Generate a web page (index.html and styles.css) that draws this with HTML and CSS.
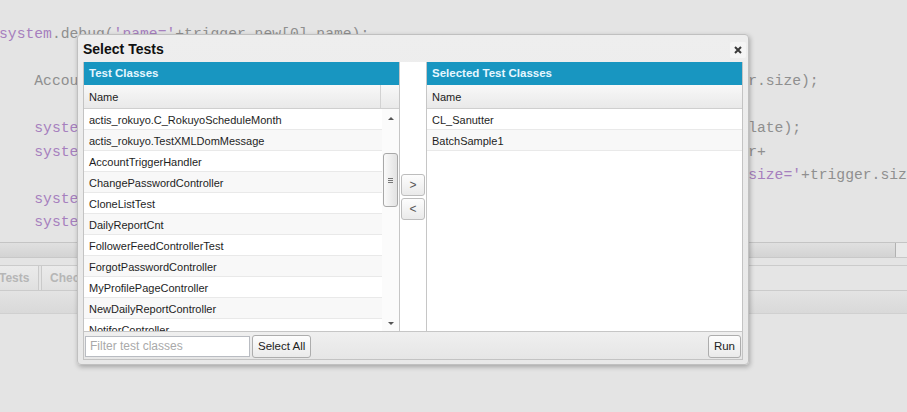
FILE: index.html
```html
<!DOCTYPE html>
<html>
<head>
<meta charset="utf-8">
<title>Select Tests</title>
<link rel="stylesheet" href="styles.css">
</head>
<body>
<div class="ide">
  <div class="code">
    <div class="ln"><span class="a"><span class="kw">system</span>.debug(<span class="kw">'name='</span>+trigger.new[0].name);</span></div>
    <div class="ln"><span class="a"> </span></div>
    <div class="ln"><span class="a">    Account[] accs = [SELECT Id, Name FROM Account WHERE Id IN :trigger.newMap.keySet()]; integer cnt = trigge</span><span class="b">r.size);</span></div>
    <div class="ln"><span class="a"> </span></div>
    <div class="ln"><span class="a">    <span class="kw">system</span>.debug(<span class="kw">'isUpdate='</span>+trigger.isUpdate+<span class="kw">' isInsert='</span>+trigger.isInsert+<span class="kw">' isUpd'</span>+trigger.isUpd</span><span class="b">late);</span></div>
    <div class="ln"><span class="a">    <span class="kw">system</span>.debug(<span class="kw">'isBefore='</span>+trigger.isBefore+<span class="kw">' isAfter='</span>+trigger.isAfter+<span class="kw">' size='</span>+trigge</span><span class="b">r+</span></div>
    <div class="ln"><span class="a">                                                                                   '</span><span class="b"><span class="kw">size='</span>+trigger.size);</span></div>
    <div class="ln"><span class="a">    <span class="kw">system</span>.debug(<span class="kw">'old='</span>+trigger.old);</span></div>
    <div class="ln"><span class="a">    <span class="kw">system</span>.debug(<span class="kw">'new='</span>+trigger.new);</span></div>
  </div>
  <div class="hscroll"><div class="hthumb"></div></div>
  <div class="gap"></div>
  <div class="tabs">
    <div class="tab first">Tests</div>
    <div class="tab">Checkpoints</div>
  </div>
  <div class="band"></div>
</div>

<div class="dialog">
  <div class="dlg-title">
    <span class="dlg-name">Select Tests</span>
    <span class="close">
      <svg width="8" height="8" viewBox="0 0 8 8"><path d="M1 1L7 7M7 1L1 7" stroke="#3a3a3a" stroke-width="2" fill="none"/></svg>
    </span>
  </div>
  <div class="dlg-inner">
    <div class="dlg-body">
      <div class="panel left">
        <div class="panel-head">Test Classes</div>
        <div class="col-head">
          <div class="col-name">Name</div>
          <div class="col-sb"></div>
        </div>
        <div class="list-wrap">
          <div class="rows">
            <div class="row">actis_rokuyo.C_RokuyoScheduleMonth</div>
            <div class="row">actis_rokuyo.TestXMLDomMessage</div>
            <div class="row">AccountTriggerHandler</div>
            <div class="row">ChangePasswordController</div>
            <div class="row">CloneListTest</div>
            <div class="row">DailyReportCnt</div>
            <div class="row">FollowerFeedControllerTest</div>
            <div class="row">ForgotPasswordController</div>
            <div class="row">MyProfilePageController</div>
            <div class="row">NewDailyReportController</div>
            <div class="row">NotiforController</div>
          </div>
          <div class="vscroll">
            <span class="arrow up"></span>
            <div class="vtrack">
              <div class="vthumb"><span class="grip"></span></div>
            </div>
            <span class="arrow down"></span>
          </div>
        </div>
      </div>
      <div class="mover">
        <button class="btn small">&gt;</button>
        <button class="btn small">&lt;</button>
      </div>
      <div class="panel right">
        <div class="panel-head">Selected Test Classes</div>
        <div class="col-head">
          <div class="col-name full">Name</div>
        </div>
        <div class="rows">
          <div class="row">CL_Sanutter</div>
          <div class="row">BatchSample1</div>
        </div>
      </div>
    </div>
    <div class="dlg-foot">
      <input class="filter" type="text" placeholder="Filter test classes">
      <button class="btn">Select All</button>
      <span class="spacer"></span>
      <button class="btn">Run</button>
    </div>
  </div>
</div>
</body>
</html>
```

FILE: styles.css
```css
html, body {
  margin: 0;
  padding: 0;
}
body {
  width: 907px;
  height: 412px;
  overflow: hidden;
  position: relative;
  background: #e4e4e4;
  font-family: "Liberation Sans", Arial, sans-serif;
}

/* ---------- backdrop IDE ---------- */
.ide {
  width: 907px;
}
.code {
  height: 242px;
  box-sizing: border-box;
  padding-top: 23px;
  margin-left: -1px;
  font-family: "Liberation Mono", monospace;
  font-size: 14.7px;
  line-height: 23.5px;
  color: #8f8f8f;
  overflow: hidden;
}
.ln {
  display: flex;
  height: 23.5px;
  white-space: pre;
}
.ln .a {
  flex: none;
  width: 85ch;
  overflow: hidden;
}
.ln .b {
  flex: none;
}
.kw {
  color: #a67fbe;
}
.hscroll {
  height: 14px;
  border-top: 1px solid #c4c4c4;
  border-bottom: 1px solid #c8c8c8;
  background: #e9e9e9;
  display: flex;
}
.hthumb {
  width: 896px;
  box-sizing: border-box;
  border-right: 1px solid #b2b2b2;
  background: linear-gradient(#e0e0e0, #d3d3d3);
}
.gap {
  height: 7px;
}
.tabs {
  height: 24px;
  border-top: 1px solid #cbcbcb;
  border-bottom: 1px solid #cbcbcb;
  background: #e5e5e5;
  display: flex;
  gap: 2px;
}
.tab {
  box-sizing: border-box;
  padding: 0 8px;
  border-left: 1px solid #cacaca;
  border-right: 1px solid #cacaca;
  font-size: 12px;
  font-weight: bold;
  color: #b6b6b6;
  line-height: 24px;
  background: linear-gradient(#ebebeb, #e0e0e0);
}
.tab.first {
  margin-left: -11px;
  padding-left: 9px;
  width: 50px;
}
.band {
  height: 22px;
  border-bottom: 1px solid #d0d0d0;
  background: linear-gradient(#e3e3e3, #d9d9d9);
}

/* ---------- dialog ---------- */
.dialog {
  position: absolute;
  left: 77px;
  top: 34px;
  width: 672px;
  height: 331px;
  box-sizing: border-box;
  border: 1px solid #c0c0c0;
  border-radius: 4px;
  background: linear-gradient(#eeeeee, #e8e8e8);
  box-shadow: 1px 2px 5px rgba(0, 0, 0, 0.28);
  display: flex;
  flex-direction: column;
}
.dlg-title {
  height: 27px;
  flex: none;
  display: flex;
  align-items: center;
  justify-content: space-between;
  padding: 0 2px 0 5px;
}
.dlg-name {
  font-size: 14px;
  font-weight: bold;
  color: #111;
  margin-top: 1px;
}
.close {
  width: 16px;
  height: 16px;
  display: flex;
  align-items: center;
  justify-content: center;
  background: #f5f5f5;
  border-radius: 2px;
  margin-top: 2px;
}
.dlg-inner {
  margin: 0 5px 4px 5px;
  border-left: 1px solid #c3c3c3;
  border-right: 1px solid #c3c3c3;
  border-bottom: 1px solid #c3c3c3;
  flex: 1;
  display: flex;
  flex-direction: column;
}
.dlg-body {
  height: 269px;
  display: flex;
  background: #fff;
}
.panel {
  width: 316px;
  flex: none;
  box-sizing: border-box;
  display: flex;
  flex-direction: column;
  background: #fff;
}
.panel.left {
  border-right: 1px solid #c6c6c6;
}
.panel.right {
  border-left: 1px solid #c6c6c6;
}
.panel-head {
  height: 23px;
  flex: none;
  background: #1896c1;
  color: #e6f7ff;
  font-size: 11.5px;
  font-weight: bold;
  line-height: 23px;
  padding-left: 5px;
}
.col-head {
  height: 23px;
  flex: none;
  display: flex;
  border-bottom: 1px solid #cfcfcf;
  background: linear-gradient(#f8f8f8, #e9e9e9);
}
.col-name {
  width: 297px;
  border-right: 1px solid #d2d2d2;
  font-size: 11px;
  color: #222;
  line-height: 24px;
  padding-left: 5px;
  box-sizing: border-box;
}
.col-name.full {
  width: auto;
  flex: 1;
  border-right: none;
}
.col-sb {
  flex: 1;
}
.list-wrap {
  flex: 1;
  display: flex;
  overflow: hidden;
}
.rows {
  display: flex;
  flex-direction: column;
  overflow: hidden;
}
.left .rows {
  width: 298px;
  flex: none;
}
.right .rows {
  flex: 1;
}
.row {
  flex: none;
  height: 20px;
  border-bottom: 1px solid #e9e9e9;
  font-size: 11px;
  color: #1e1e1e;
  line-height: 22px;
  padding-left: 5px;
  white-space: nowrap;
  overflow: hidden;
}
.row:nth-child(even) {
  background: #f8f8f8;
}
.vscroll {
  flex: 1;
  display: flex;
  flex-direction: column;
  align-items: center;
  background: #fbfbfb;
  padding-top: 8px;
  padding-bottom: 6px;
}
.arrow {
  width: 0;
  height: 0;
  border-left: 3px solid transparent;
  border-right: 3px solid transparent;
  flex: none;
}
.arrow.up {
  border-bottom: 3px solid #555;
}
.arrow.down {
  border-top: 3px solid #555;
}
.vtrack {
  flex: 1;
  align-self: stretch;
  padding-top: 33px;
}
.vthumb {
  margin-left: 1px;
  width: 15px;
  height: 54px;
  box-sizing: border-box;
  border: 1px solid #a8a8a8;
  border-radius: 3px;
  background: linear-gradient(to right, #fafafa, #e2e2e2);
  display: flex;
  align-items: center;
  justify-content: center;
}
.grip {
  width: 5px;
  height: 5px;
  box-sizing: border-box;
  border-top: 1px solid #777;
  border-bottom: 1px solid #777;
  background: linear-gradient(transparent 1px, #777 1px, #777 2px, transparent 2px);
}
.mover {
  flex: 1;
  display: flex;
  flex-direction: column;
  align-items: center;
  justify-content: center;
  gap: 2px;
  background: #fff;
}
.btn {
  font-family: "Liberation Sans", Arial, sans-serif;
  font-size: 11.5px;
  color: #222;
  height: 23px;
  padding: 0 5px;
  border: 1px solid #adadad;
  border-radius: 3px;
  background: linear-gradient(#fdfdfd, #eaeaea);
  margin: 0;
}
.btn.small {
  width: 24px;
  height: 22px;
  padding: 0;
  color: #555;
  font-size: 12px;
  border-color: #bdbdbd;
}
.dlg-foot {
  flex: 1;
  display: flex;
  align-items: center;
  border-top: 1px solid #c6c6c6;
  padding: 1px 1px 0 1px;
  gap: 2px;
  background: linear-gradient(#efefef, #e6e6e6);
}
.filter {
  width: 165px;
  height: 21px;
  box-sizing: border-box;
  border: 1px solid #b9bcc2;
  padding: 0 4px;
  font-family: "Liberation Sans", Arial, sans-serif;
  font-size: 12px;
  background: #fff;
  margin: 0;
}
.filter::placeholder {
  color: #a9a9a9;
}
.spacer {
  flex: 1;
}
```
